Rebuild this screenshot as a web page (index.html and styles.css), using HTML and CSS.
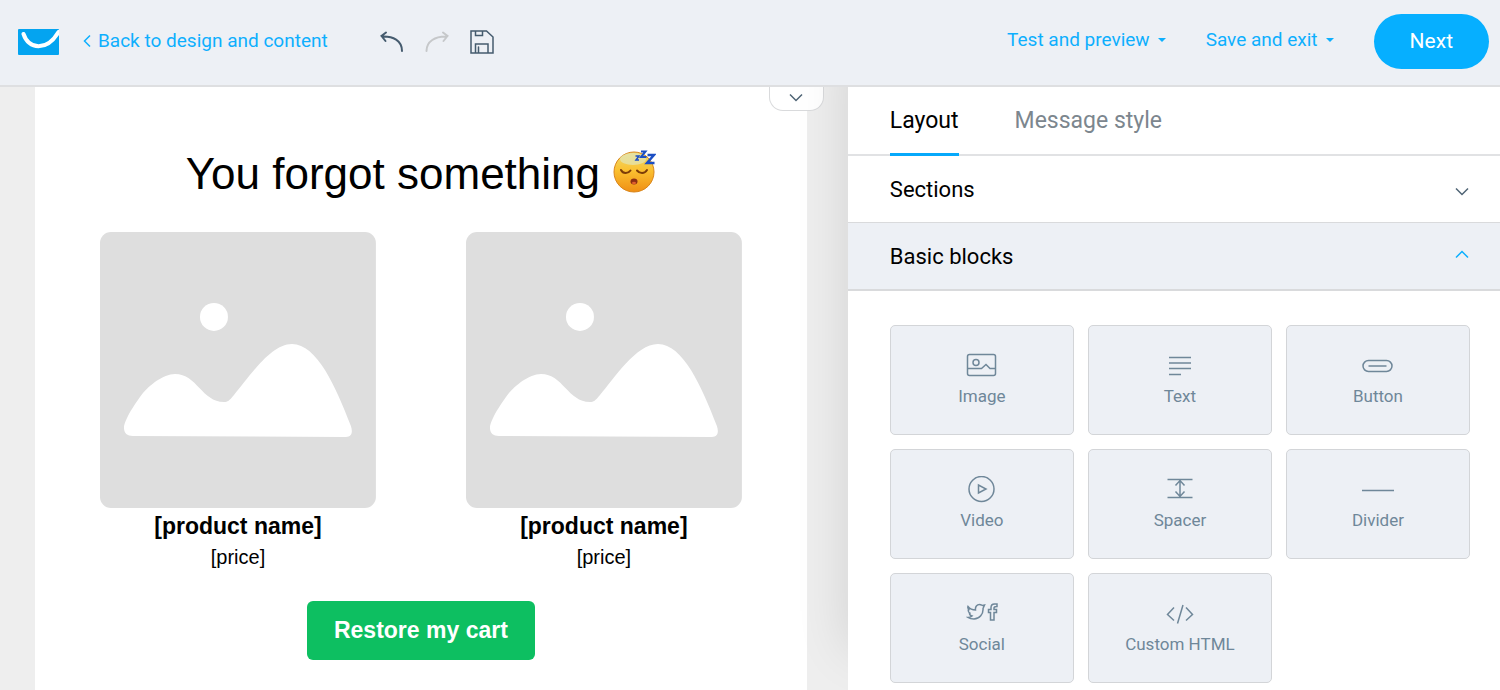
FILE: index.html
```html
<!DOCTYPE html>
<html lang="en">
<head>
<meta charset="utf-8">
<title>Message editor</title>
<link rel="stylesheet" href="styles.css">
</head>
<body>

<header class="topbar">
  <a href="#" class="logo" aria-label="Home">
    <svg width="41" height="26" viewBox="0 0 41 26">
      <rect width="41" height="26" rx="1" fill="#04a4f0"/>
      <path d="M5.500 5C8 12.500 13.500 17.300 20.500 17.300C29 17.300 35.500 11.500 40.500 3" fill="none" stroke="#fff" stroke-width="4" stroke-linecap="round"/>
    </svg>
  </a>
  <a href="#" class="back">
    <svg width="8" height="14" viewBox="0 0 8 14"><path d="M7 1.500L1.500 7L7 12.500"/></svg>
    Back to design and content
  </a>
  <div class="tools">
    <button type="button" class="tool" aria-label="Undo">
      <svg width="24" height="24" viewBox="0 0 24 24"><path d="M6 2.500L1.500 6L5.500 11M2 6.500C13 6 22 10.500 22 21" stroke-width="2"/></svg>
    </button>
    <button type="button" class="tool toolOff" aria-label="Redo">
      <svg width="24" height="24" viewBox="0 0 24 24"><path d="M18 2.500L22.500 6L18.500 11M22 6.500C10 6 1.500 11.500 1.500 21" stroke-width="2"/></svg>
    </button>
    <button type="button" class="tool" aria-label="Save">
      <svg width="24" height="24" viewBox="0 0 24 24"><path d="M1 1H16.500L23 7V23H1ZM5.500 1V5.500H12.500V1M5.500 23V14H18V23M8.500 17V22.500"/></svg>
    </button>
  </div>
  <nav class="actions">
    <button type="button" class="menuButton">Test and preview <span class="caret"></span></button>
    <button type="button" class="menuButton">Save and exit <span class="caret"></span></button>
    <button type="button" class="next">Next</button>
  </nav>
</header>

<main class="editor">

<section class="canvas">
  <button type="button" class="pullTab" aria-label="Show message details">
    <svg width="14" height="9" viewBox="0 0 14 9"><path d="M1 1.500L7 7.500L13 1.500"/></svg>
  </button>
  <div class="email">
    <h1 class="emailTitle">You forgot something
      <svg class="emoji" width="44" height="48" viewBox="0 0 44 48" role="img" aria-label="Sleeping face">
        <defs>
          <linearGradient id="face" x1="0" y1="0" x2="0" y2="1">
            <stop offset="0" stop-color="#eedb72"/>
            <stop offset="0.45" stop-color="#fbc131"/>
            <stop offset="1" stop-color="#f08f14"/>
          </linearGradient>
        </defs>
        <circle cx="22" cy="22" r="20" fill="url(#face)" stroke="#d9861c"/>
        <ellipse cx="21" cy="9" rx="13" ry="6" fill="#e3e6b8" opacity="0.7"/>
        <path d="M9 20C11 24 16 24 18.500 20.500M25 20.500C28 24 32.500 24 35 20" fill="none" stroke="#7c3c08" stroke-width="2" stroke-linecap="round"/>
        <ellipse cx="22" cy="31.500" rx="3.500" ry="3" fill="#8d2f14"/>
        <ellipse cx="22" cy="33" rx="2" ry="1.300" fill="#e2602d"/>
        <path d="M23.500 6H27L24 10H27" fill="none" stroke="#1c4fc4" stroke-width="1.500"/>
        <path d="M29 1.500H33.500L29 7H34.500" fill="none" stroke="#1c4fc4" stroke-width="2"/>
        <path d="M35.500 5H42L35 13H42.500" fill="none" stroke="#1c4fc4" stroke-width="2.500"/>
      </svg>
    </h1>
    <div class="products">
      <div class="product">
        <svg class="productImage" viewBox="0 0 276 276">
          <rect width="276" height="276" rx="11" fill="#dedede"/>
          <circle cx="114" cy="85" r="14" fill="#fff"/>
          <path d="M24 196C24 188 36 170 43 161C49 154 63 142 75 142C97 142 102 170 124 170C128 170 129 169 134 163C148 147 170 112 192 112C217 112 236 155 251 194C253 200 252 205 246 205L33 204C27 204 24 201 24 196Z" fill="#fff"/>
        </svg>
        <h2 class="productName">[product name]</h2>
        <p class="price">[price]</p>
      </div>
      <div class="product">
        <svg class="productImage" viewBox="0 0 276 276">
          <rect width="276" height="276" rx="11" fill="#dedede"/>
          <circle cx="114" cy="85" r="14" fill="#fff"/>
          <path d="M24 196C24 188 36 170 43 161C49 154 63 142 75 142C97 142 102 170 124 170C128 170 129 169 134 163C148 147 170 112 192 112C217 112 236 155 251 194C253 200 252 205 246 205L33 204C27 204 24 201 24 196Z" fill="#fff"/>
        </svg>
        <h2 class="productName">[product name]</h2>
        <p class="price">[price]</p>
      </div>
    </div>
    <button type="button" class="restore">Restore my cart</button>
  </div>
</section>

<aside class="panel">
  <div class="tabs" role="tablist">
    <button type="button" class="tab tabActive" role="tab" aria-selected="true">Layout</button>
    <button type="button" class="tab" role="tab" aria-selected="false">Message style</button>
  </div>
  <button type="button" class="accordion" aria-expanded="false">
    Sections
    <svg width="14" height="13" viewBox="0 0 14 13"><path d="M1 5.500L7 11.500L13 5.500"/></svg>
  </button>
  <button type="button" class="accordion accordionOpen" aria-expanded="true">
    Basic blocks
    <svg width="14" height="13" viewBox="0 0 14 13"><path d="M1 7.500L7 1.500L13 7.500"/></svg>
  </button>
  <div class="blocks">
    <button type="button" class="block">
      <svg width="32" height="28" viewBox="0 0 32 28"><rect x="1.500" y="2.500" width="28" height="21" rx="2"/><circle cx="10" cy="10.500" r="3"/><path d="M1.500 16.500H15.500L20 12.500L24 16.500H29.500"/></svg>
      Image
    </button>
    <button type="button" class="block">
      <svg width="32" height="28" viewBox="0 0 32 28"><path d="M5 5.500H27M5 11H27M5 16.500H27M5 22.500H17"/></svg>
      Text
    </button>
    <button type="button" class="block">
      <svg width="32" height="28" viewBox="0 0 32 28"><rect x="1" y="8.500" width="29" height="11" rx="5.500"/><path d="M6.500 14H24.500"/></svg>
      Button
    </button>
    <button type="button" class="block">
      <svg width="32" height="28" viewBox="0 0 32 28"><circle cx="15.500" cy="13" r="12.500"/><path d="M12.500 9V17L20 13Z"/></svg>
      Video
    </button>
    <button type="button" class="block">
      <svg width="32" height="28" viewBox="0 0 32 28"><path d="M3.500 3.500H28.500M3.500 21.500H28.500M16 5V20M11.500 9.500L16 4.500L20.500 9.500M11.500 15.500L16 20.500L20.500 15.500"/></svg>
      Spacer
    </button>
    <button type="button" class="block">
      <svg width="32" height="28" viewBox="0 0 32 28"><path d="M0 14.500H32"/></svg>
      Divider
    </button>
    <button type="button" class="block">
      <svg width="32" height="28" viewBox="0 0 32 28">
        <path d="M2 6.500C4 9 6.500 10 9.500 10C9 6.500 11 4.500 13.500 4.500C15 4.500 16 5.500 16.500 5.500L18.500 5L17 8.500C17.500 14 13.500 19 8 19C5.500 19 3.500 18.500 2 17.500C4 17.500 5 17 6 16C4 15.500 3.500 14.500 3.500 13.500H4.500C2.500 12.500 2 10.500 2.500 9.500L3.500 10C2 9 1.500 8 2 6.500Z"/>
        <path d="M31 4H28.500C26 4 25 5.500 25 7.500V9.500H22.500V12.500H24.500V20H28V12.500H30.500V9.500H28V8C28 7 28.500 6.500 31 6.500Z"/>
      </svg>
      Social
    </button>
    <button type="button" class="block">
      <svg width="32" height="28" viewBox="0 0 32 28"><path d="M10 7.500L3.500 14.500L10 20.500M19 5L13.500 23.500M22 7.500L28.500 14.500L22 20.500"/></svg>
      Custom HTML
    </button>
  </div>
</aside>

</main>

</body>
</html>
```
FILE: styles.css
```css
* {
  box-sizing: border-box;
}

body {
  margin: 0;
  min-height: 100vh;
  display: flex;
  flex-direction: column;
  font-family: Roboto, "Liberation Sans", sans-serif;
  color: #000;
}

button {
  margin: 0;
  padding: 0;
  border: 0;
  background: none;
  font: inherit;
  color: inherit;
  cursor: pointer;
}

svg {
  display: block;
  flex-shrink: 0;
}

/* top bar */

.topbar {
  display: flex;
  align-items: center;
  height: 87px;
  padding: 0 11px 2px 18px;
  background: #edf0f5;
  border-bottom: 2px solid #dedfe1;
  position: relative;
  z-index: 2;
}

.back {
  display: flex;
  align-items: center;
  gap: 7px;
  margin-left: 24px;
  padding-bottom: 2px;
  font-size: 19px;
  line-height: 24px;
  color: #0daffe;
  text-decoration: none;
}

.back svg {
  fill: none;
  stroke: #0daffe;
  stroke-width: 1.5;
}

.tools {
  display: flex;
  gap: 21px;
  margin-left: 52px;
}

.tool svg {
  fill: none;
  stroke: #455b6e;
  stroke-width: 1.5;
  stroke-linecap: round;
}

.toolOff svg {
  stroke: #c6c8ca;
}

.actions {
  display: flex;
  align-items: center;
  margin-left: auto;
}

.menuButton {
  display: flex;
  align-items: center;
  gap: 8px;
  margin-right: 40px;
  padding-bottom: 4px;
  font-size: 19px;
  line-height: 24px;
  color: #0daffe;
}

.caret {
  border: 4px solid transparent;
  border-top-color: #0daffe;
  border-bottom: 0;
}

.next {
  padding: 0 36px;
  border-radius: 28px;
  background: #06afff;
  font-size: 21px;
  line-height: 55px;
  color: #fff;
}

/* editor */

.editor {
  flex: 1;
  display: grid;
  grid-template-columns: 13fr 10fr;
}

.canvas {
  position: relative;
  padding: 0 41px 0 35px;
  background: #eee;
  font-family: "Liberation Sans", Arial, sans-serif;
}

.pullTab {
  position: absolute;
  top: 0;
  right: 24px;
  display: flex;
  justify-content: center;
  width: 55px;
  height: 24px;
  padding-top: 6px;
  border: 1px solid #d9dadc;
  border-top: 0;
  border-radius: 0 0 14px 14px;
  background: #fff;
}

.pullTab svg,
.accordion svg {
  fill: none;
  stroke: #4f6475;
  stroke-width: 1.5;
}

.email {
  height: 100%;
  padding: 59px 65px 30px;
  background: #fff;
  text-align: center;
}

.emailTitle {
  display: flex;
  justify-content: center;
  align-items: center;
  gap: 12px;
  margin: 0 0 31px;
  font-size: 44px;
  font-weight: normal;
  line-height: 55px;
  white-space: nowrap;
}

.products {
  display: grid;
  grid-template-columns: 1fr 1fr;
  gap: 90px;
}

.productImage {
  width: 100%;
}

.productName {
  margin: 3px 0 0;
  font-size: 23px;
  line-height: 30px;
}

.price {
  margin: 0;
  font-size: 20px;
  line-height: 32px;
}

.restore {
  margin-top: 28px;
  padding: 0 27px;
  border-radius: 6px;
  background: #0dbf61;
  font-size: 23px;
  font-weight: bold;
  line-height: 59px;
  color: #fff;
}

/* side panel */

.panel {
  position: relative;
  z-index: 1;
  background: #fff;
  box-shadow: 0 -40px 50px rgba(0, 0, 0, 0.12);
}

.tabs {
  display: flex;
  gap: 56px;
  height: 69px;
  padding-left: 42px;
  border-bottom: 2px solid #e1e2e4;
}

.tab {
  height: 69px;
  border-bottom: 3px solid transparent;
  font-size: 23px;
  color: #7c868e;
}

.tabActive {
  border-color: #06a9fb;
  color: #000;
}

.accordion {
  display: flex;
  justify-content: space-between;
  align-items: center;
  width: 100%;
  height: 67px;
  padding: 0 31px 0 42px;
  border-bottom: 1px solid #d9dadc;
  font-size: 22px;
}

.accordionOpen {
  height: 68px;
  border-bottom-width: 2px;
  background: #edf0f5;
}

.accordionOpen svg {
  stroke: #0daffe;
}

.blocks {
  display: grid;
  grid-template-columns: repeat(3, 1fr);
  gap: 14px;
  padding: 34px 30px 6px 42px;
}

.block {
  display: flex;
  flex-direction: column;
  align-items: center;
  gap: 6px;
  height: 110px;
  padding-top: 26px;
  border: 1px solid #d3d5d8;
  border-radius: 5px;
  background: #edf0f5;
  font-size: 17px;
  line-height: 20px;
  color: #6f8799;
}

.block svg {
  fill: none;
  stroke: #6f8799;
  stroke-width: 1.5;
}
```
